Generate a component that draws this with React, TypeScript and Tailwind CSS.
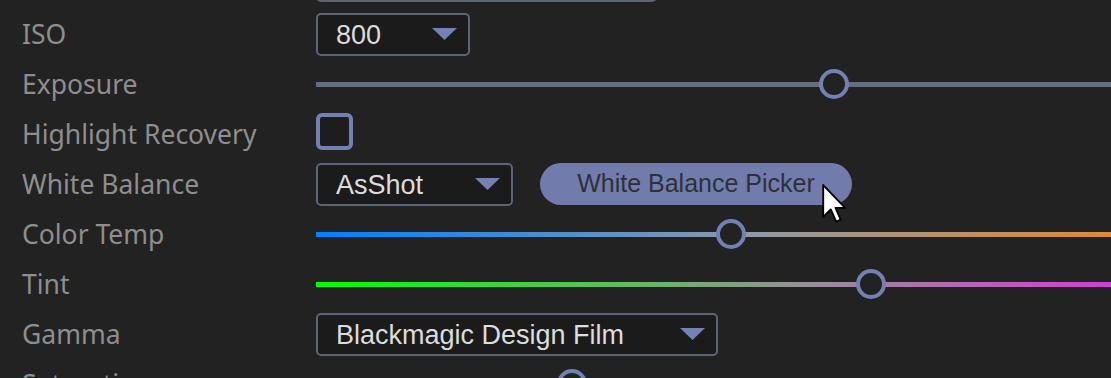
import React from 'react';

type Row =
  | { label: string; kind: 'select'; value: string; width: number }
  | { label: string; kind: 'slider'; pos: number; track: string }
  | { label: string; kind: 'check' }
  | { label: string; kind: 'wb'; value: string; width: number };

const rows: Row[] = [
  { label: '', kind: 'select', value: '', width: 341 },
  { label: 'ISO', kind: 'select', value: '800', width: 154 },
  { label: 'Exposure', kind: 'slider', pos: 518, track: 'bg-[#666d7f]' },
  { label: 'Highlight Recovery', kind: 'check' },
  { label: 'White Balance', kind: 'wb', value: 'AsShot', width: 197 },
  {
    label: 'Color Temp',
    kind: 'slider',
    pos: 415,
    track: 'bg-[linear-gradient(to_right,#0080ff,#909aa4_55%,#dc8a38)]',
  },
  {
    label: 'Tint',
    kind: 'slider',
    pos: 555,
    track: 'bg-[linear-gradient(to_right,#00ff00,#949494_60%,#d040d0)]',
  },
  { label: 'Gamma', kind: 'select', value: 'Blackmagic Design Film', width: 402 },
  { label: 'Saturation', kind: 'slider', pos: 256, track: 'bg-[#666d7f]' },
];

const Arrow = () => (
  <svg width="25" height="12" viewBox="0 0 25 12" className="shrink-0">
    <polygon points="0,0 25,0 12.5,12" fill="#7381b3" />
  </svg>
);

const Select: React.FC<{ value: string; width: number; className?: string }> = ({ value, width, className }) => (
  <div
    style={{ width }}
    className={
      'h-[43px] border-2 border-[#5d6475] rounded-[5px] bg-[#1b1b1b] flex items-center justify-between pl-[18px] pr-[11px] ' +
      (className ?? '')
    }
  >
    <span className="mt-[2px] text-[27px] leading-none text-[#dcdcdc] font-['Liberation_Sans',Arial,sans-serif]">{value}</span>
    <Arrow />
  </div>
);

const Slider: React.FC<{ pos: number; track: string }> = ({ pos, track }) => (
  <div className="relative flex-1 h-[30px] flex items-center">
    <div className={'w-full h-[5px] ' + track} />
    <div
      style={{ left: pos - 15 }}
      className="absolute top-0 w-[30px] h-[30px] rounded-full border-4 border-[#7380b2] bg-[#222222]"
    />
  </div>
);

const Cursor = () => (
  <svg
    width="25"
    height="39"
    viewBox="0 0 12 19"
    className="absolute left-[822px] top-[184px]"
  >
    <path
      d="M0.5 0.5 L0.5 16 L4.2 12.4 L6.8 18.3 L9 17.3 L6.5 11.6 L11.2 11.6 Z"
      fill="#ffffff"
      stroke="#000000"
      strokeWidth="0.9"
      strokeLinejoin="round"
    />
  </svg>
);

export default function App() {
  return (
    <div className="relative w-[1111px] h-[378px] overflow-hidden bg-[#222222] font-['Noto_Sans',sans-serif]">
      <div className="flex flex-col -mt-[41px]">
        {rows.map((row, i) => (
          <div key={i} className="h-[50px] flex items-center pl-[22px]">
            <div className="w-[294px] shrink-0 text-[26.5px] text-[#8e8e8e] leading-none">{row.label}</div>
            {row.kind === 'select' && (
              <Select value={row.value} width={row.width} className={i === 0 ? '-mt-[8px]' : ''} />
            )}
            {row.kind === 'slider' && <Slider pos={row.pos} track={row.track} />}
            {row.kind === 'check' && (
              <div className="w-[37px] h-[37px] -mt-[5px] border-4 border-[#7380b2] rounded-[6px] bg-[#1d1d1d]" />
            )}
            {row.kind === 'wb' && (
              <div className="flex items-center">
                <Select value={row.value} width={row.width} />
                <button className="ml-[27px] w-[312px] h-[42px] rounded-full bg-[#717cad] text-[25px] text-[#2e3038] font-['Liberation_Sans',Arial,sans-serif]">
                  White Balance Picker
                </button>
              </div>
            )}
          </div>
        ))}
      </div>
      <Cursor />
    </div>
  );
}
